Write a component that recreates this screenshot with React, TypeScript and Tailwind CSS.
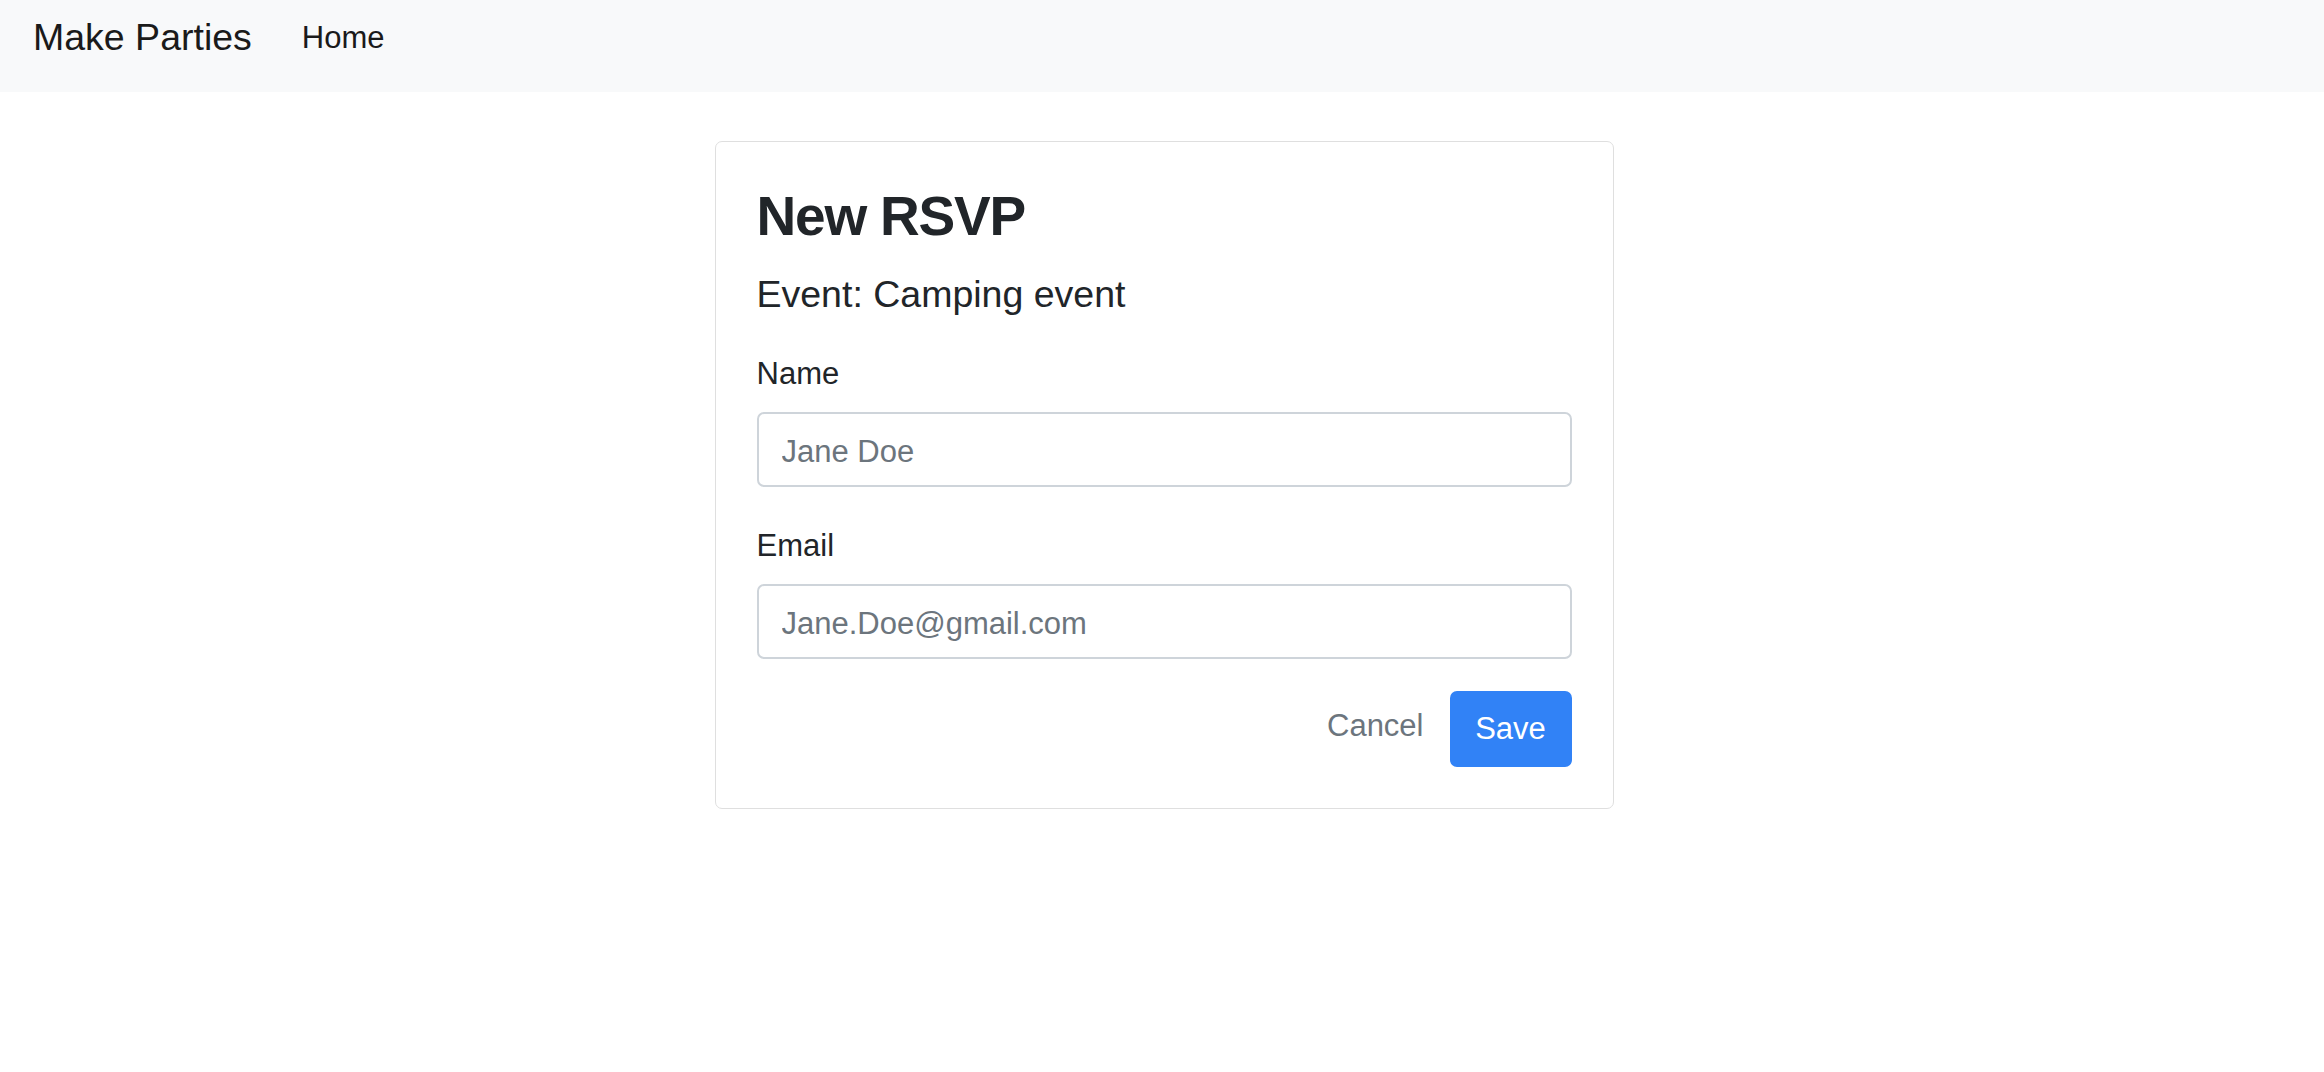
import React from 'react'

const font = { fontFamily: '"Liberation Sans", Arial, sans-serif' }

function Field({ label, placeholder, type = 'text' }: { label: string; placeholder: string; type?: string }) {
  return (
    <div>
      <label className="block text-[31px] leading-[45px] text-[#212529]">{label}</label>
      <input
        type={type}
        placeholder={placeholder}
        className="mt-[16px] block w-full h-[75px] border-2 border-[#ced4da] rounded-[7px] px-[23px] pt-[5px] text-[31px] text-[#495057] placeholder:text-[#6c757d] outline-none bg-white"
      />
    </div>
  )
}

export default function App() {
  return (
    <div className="min-h-screen bg-white" style={font}>
      {/* Navbar */}
      <nav className="h-[92px] bg-[#f8f9fa] flex items-start pt-[15px] px-[33px]">
        <a className="text-[37.5px] leading-[45px] text-[#1a1a1a]">Make Parties</a>
        <a className="ml-[50px] text-[31px] leading-[45px] text-[#1a1a1a]">Home</a>
      </nav>

      {/* Card */}
      <div className="flex justify-center pl-[4px]">
        <div className="mt-[49px] w-[899px] border border-[#dfdfdf] rounded-[7px] p-[41px]">
          <h2 className="text-[55px] leading-[66px] font-bold tracking-[-1.2px] text-[#212529]">New RSVP</h2>
          <h5 className="mt-[23px] text-[37.5px] leading-[45px] text-[#212529]">Event: Camping event</h5>

          <div className="mt-[34px]">
            <Field label="Name" placeholder="Jane Doe" />
          </div>
          <div className="mt-[36px]">
            <Field label="Email" placeholder="Jane.Doe@gmail.com" type="email" />
          </div>

          {/* Actions */}
          <div className="mt-[32px] flex items-center justify-end gap-[26px]">
            <button className="mb-[6px] text-[31px] text-[#6c757d]">Cancel</button>
            <button className="w-[122px] h-[76px] rounded-[7px] bg-[#3182f6] text-white text-[31px]">Save</button>
          </div>
        </div>
      </div>
    </div>
  )
}
